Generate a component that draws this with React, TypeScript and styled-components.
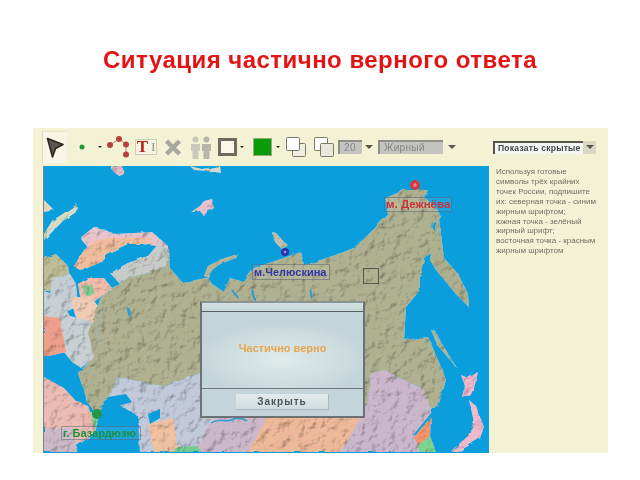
import React from 'react'
import styled, { createGlobalStyle } from 'styled-components'

const GlobalStyle = createGlobalStyle`
  html, body { margin: 0; padding: 0; background: #fff; }
  body { font-family: "Liberation Sans", Arial, sans-serif; width: 640px; height: 480px; overflow: hidden; }
`

const Page = styled.div`
  width: 640px;
  height: 480px;
  padding-top: 47px;
  box-sizing: border-box;
`

const Title = styled.h1`
  margin: 0;
  height: 81px;
  font-size: 24px;
  line-height: 26px;
  font-weight: 700;
  letter-spacing: 0.47px;
  text-align: center;
  color: #e41414;
  filter: blur(0.4px);
`

const Panel = styled.div`
  margin-left: 33px;
  width: 575px;
  height: 325px;
  background: #f3f2d4;
  display: flex;
  flex-direction: column;
  filter: blur(0.55px);
`

const Toolbar = styled.div`
  height: 38px;
  flex: none;
  display: flex;
  align-items: center;
  box-sizing: border-box;
  padding-left: 9px;
`

const Tool = styled.div<{ $w: number; $ml?: number }>`
  width: ${p => p.$w}px;
  margin-left: ${p => p.$ml ?? 0}px;
  flex: none;
  display: flex;
  align-items: center;
  justify-content: center;
  svg { display: block; }
`

const ArrowTool = styled(Tool)`
  height: 32px;
  background: #f8f7e6;
  border-left: 1px solid #dddcc0;
  border-top: 1px solid #e6e5cb;
  box-sizing: border-box;
`

const TextTool = styled(Tool)`
  height: 16px;
  box-sizing: border-box;
  border: 1px solid #cfcdb8;
  background: #f6f5e2;
  font-family: "Liberation Serif", serif;
  font-weight: 700;
  font-size: 17px;
  line-height: 14px;
  color: #b5231e;
  gap: 3px;
`

const Caret = styled.span`
  font-weight: 400;
  font-size: 12px;
  color: #8c8c80;
`

const Drop = styled.i<{ $ml: number; $big?: boolean }>`
  flex: none;
  display: block;
  margin-left: ${p => p.$ml}px;
  width: 0;
  height: 0;
  border-left: ${p => (p.$big ? 4 : 2)}px solid transparent;
  border-right: ${p => (p.$big ? 4 : 2)}px solid transparent;
  border-top: ${p => (p.$big ? 4 : 2)}px solid ${p => (p.$big ? '#56564c' : '#222')};
`

const Swatch = styled.div<{ $ml: number }>`
  flex: none;
  width: 19px;
  height: 18px;
  margin-left: ${p => p.$ml}px;
  background: #0a9a0a;
  border: 1px solid #8fae7a;
  box-sizing: border-box;
`

const Outline = styled.div`
  flex: none;
  width: 19px;
  height: 18px;
  margin-left: 6px;
  border: 3px solid #6d6b5e;
  background: #f8f7e8;
  box-sizing: border-box;
`

const DisabledSelect = styled.div<{ $w: number; $ml: number }>`
  flex: none;
  width: ${p => p.$w}px;
  height: 14px;
  margin-left: ${p => p.$ml}px;
  box-sizing: border-box;
  background: #c4c4c0;
  border-top: 2px solid #8f8f88;
  border-left: 2px solid #8f8f88;
  padding-left: 4px;
  font-size: 10px;
  line-height: 12px;
  letter-spacing: 0.4px;
  color: #85858a;
`

const Reveal = styled.div`
  flex: none;
  width: 90px;
  height: 13px;
  margin-left: 37px;
  box-sizing: border-box;
  background: #f4f6f4;
  border-top: 2px solid #55554e;
  border-left: 2px solid #55554e;
  padding-left: 3px;
  font-size: 8.5px;
  font-weight: 700;
  line-height: 11px;
  letter-spacing: 0.25px;
  color: #45454a;
  white-space: nowrap;
`

const RevealArrow = styled.div`
  flex: none;
  width: 13px;
  height: 13px;
  background: #d8d8c4;
  display: flex;
  align-items: center;
  justify-content: center;
`

const Body = styled.div`
  flex: 1;
  min-height: 0;
  display: flex;
  padding-left: 10px;
`

const MapArea = styled.div`
  position: relative;
  width: 446px;
  height: 287px;
  flex: none;
  overflow: hidden;
  background: #0b9edd;
  border-left: 1px solid #76858c;
  box-sizing: border-box;
  svg { display: block; }
`

const Hint = styled.div`
  margin: 1px 0 0 7px;
  width: 108px;
  font-size: 8px;
  line-height: 9.9px;
  color: #6f6f68;
  white-space: nowrap;
`

const MapLabel = styled.div<{ $x: number; $y: number; $w: number; $h: number; $color: string; $size: number }>`
  position: absolute;
  left: ${p => p.$x}px;
  top: ${p => p.$y}px;
  width: ${p => p.$w}px;
  height: ${p => p.$h}px;
  box-sizing: border-box;
  border: 1px solid rgba(80, 90, 110, 0.5);
  background: rgba(255, 255, 255, 0.08);
  font-size: ${p => p.$size}px;
  font-weight: 700;
  line-height: ${p => p.$h - 2}px;
  padding-left: 1px;
  color: ${p => p.$color};
  white-space: nowrap;
  overflow: hidden;
`

const Pin = styled.div<{ $x: number; $y: number; $r: number; $color: string; $core: string }>`
  position: absolute;
  left: ${p => p.$x - p.$r}px;
  top: ${p => p.$y - p.$r}px;
  width: ${p => p.$r * 2}px;
  height: ${p => p.$r * 2}px;
  border-radius: 50%;
  background: radial-gradient(circle, ${p => p.$core} 0 18%, ${p => p.$color} 30%);
`

const Marker = styled.div`
  position: absolute;
  left: 319px;
  top: 102px;
  width: 16px;
  height: 16px;
  box-sizing: border-box;
  border: 1px solid #55584c;
`

const Dialog = styled.div`
  position: absolute;
  left: 156px;
  top: 135px;
  width: 165px;
  height: 117px;
  box-sizing: border-box;
  border: 2px solid #6c7274;
  border-top-color: #8b9294;
  background: #c3d5da;
  display: flex;
  flex-direction: column;
`

const DialogHead = styled.div`
  height: 8px;
  flex: none;
  background: linear-gradient(#d3e2e2, #c3d8d8);
  border-bottom: 1px solid #57625f;
`

const DialogText = styled.div`
  flex: 1;
  display: flex;
  align-items: center;
  justify-content: center;
  padding-bottom: 4px;
  background: radial-gradient(ellipse 55% 50% at 50% 62%, #e0ebea 0%, #c3d5da 100%);
  font-size: 11px;
  font-weight: 700;
  color: #e9a64e;
`

const DialogFoot = styled.div`
  height: 28px;
  flex: none;
  box-sizing: border-box;
  border-top: 1px solid #6f7a7c;
  display: flex;
  justify-content: center;
  padding-top: 5px;
`

const CloseButton = styled.button`
  width: 93px;
  height: 16px;
  padding: 0;
  border: 0;
  border-bottom: 1px solid #a8babd;
  border-right: 1px solid #a8babd;
  background: linear-gradient(#e2ebeb, #cfdcdd);
  font-family: inherit;
  font-size: 10px;
  font-weight: 700;
  letter-spacing: 1px;
  color: #4e5658;
`

const hintLines = [
  'Используя готовые',
  'символы трёх крайних',
  'точек России, подпишите',
  'их: северная точка - синим',
  'жирным шрифтом;',
  'южная точка - зелёный',
  'жирный шрифт;',
  'восточная точка - красным',
  'жирным шрифтом',
]

const regions: [string, string][] = [
  // north islands
  ['#e8bcc4', '67,0 78,0 80,7 74,9 69,5'],
  ['#d9d8c8', '146,0 158,3 176,0 177,7 165,5 150,4'],
  ['#e9c0cc', '147,46 156,40 160,35 168,33 170,42 163,46 160,50 156,45'],
  ['#dfd7b8', '0,34 10,44 0,46'],
  ['#d9dcc0', '0,68 8,55 20,47 33,38 32,46 18,56 8,66 0,74'],
  ['#c4bfa4', '228,66 232,67 240,76 244,79 238,83 231,76'],
  ['#b8b390', '160,110 164,100 178,93 194,88 192,92 176,98 168,104 165,112'],
  // scandinavia
  ['#e7c4cc', '36,72 50,61 72,68 108,66 124,80 124,88 112,80 70,74 46,84'],
  ['#f2bd9c', '30,100 40,84 52,74 72,72 108,72 103,78 84,78 62,88 62,94 44,102 36,104'],
  ['#c8ccc8', '66,107 84,97 104,90 116,76 124,84 122,100 100,108 84,112 76,118'],
  // west
  ['#bcbc96', '0,92 12,88 24,100 26,112 10,125 0,125'],
  ['#c4ccd4', '8,112 26,108 32,118 34,140 14,150 6,130'],
  ['#f2bcac', '34,118 44,112 60,112 68,122 58,130 44,140 36,130'],
  ['#84cc90', '38,120 48,118 50,127 42,130'],
  ['#f0ccb4', '26,132 46,130 54,140 50,156 34,158'],
  ['#c8d0d4', '0,125 14,130 26,150 50,156 50,192 34,204 20,186 8,190 0,190'],
  ['#eea08c', '0,150 16,152 22,186 6,190 0,190'],
  ['#ecbcb4', '0,210 20,212 34,236 44,240 52,262 44,272 24,286 0,286'],
  ['#ccb8c8', '0,262 28,262 34,286 0,286'],
  // russia
  ['#b0b190', '124,84 126,102 138,116 164,112 168,118 180,126 186,112 200,116 210,102 240,92 257,86 260,99 277,94 297,87 310,82 327,66 344,49 342,32 360,24 384,24 380,31 392,42 396,50 388,60 392,70 394,82 380,92 376,110 376,124 362,141 360,174 384,171 397,201 402,214 394,241 385,244 380,224 340,204 327,207 324,240 160,240 157,207 120,221 74,211 64,232 52,248 44,237 34,207 50,191 44,167 57,131 68,122 76,118 84,112 100,108 122,100'],
  ['#aeaf8e', '394,45 400,92 414,108 424,128 425,141 412,128 402,116 392,104 386,94'],
  ['#b2b194', '387,164 392,166 400,181 414,204 408,196 394,180'],
  ['#aeae90', '313,83 322,76 326,80 318,88'],
  // central asia
  ['#c2c9da', '74,211 120,221 157,207 170,250 222,250 214,270 207,286 96,286 94,250 64,232'],
  ['#efc1a0', '104,258 130,252 134,286 110,286'],
  ['#ccb8ca', '170,250 226,250 222,270 206,286 150,286 160,268'],
  ['#edb998', '224,250 325,240 297,286 204,286'],
  ['#cbb7cc', '327,207 340,204 380,224 388,246 370,268 376,286 297,286 318,250 324,234'],
  ['#f29470', '387,251 370,271 376,284 386,270'],
  ['#7cd490', '373,280 386,270 392,286 376,286'],
  ['#73ca92', '126,286 134,281 152,280 158,286'],
  // japan
  ['#f2b8cc', '417,209 424,212 434,206 430,222 427,228 418,231 421,220'],
  ['#f2b8cc', '425,234 432,240 440,261 436,272 424,280 414,286 406,286 424,270 430,256'],
  // azerbaijan glow
  ['#8cd89e', '44,246 52,246 60,268 54,272 48,260'],
  ['#ecb4ac', '36,248 46,246 50,262 40,268'],
]

const waters = [
  '0,191 20,187 28,196 40,204 30,206 33,236 20,222 0,211',
  '64,231 82,228 88,236 74,240 70,262 72,286 54,286 50,272 54,254',
  '104,248 116,243 116,252 106,258',
]

const RussiaMap = () => (
  <svg width="446" height="287" viewBox="0 0 446 287">
    <defs>
      <filter id="relief" x="0" y="0" width="100%" height="100%" colorInterpolationFilters="sRGB">
        <feTurbulence type="fractalNoise" baseFrequency="0.1" numOctaves="4" seed="7" result="noise" />
        <feDisplacementMap in="SourceGraphic" in2="noise" scale="3" result="shape" />
        <feDiffuseLighting in="noise" surfaceScale="1.5" diffuseConstant="1.2" lightingColor="#ffffff" result="light">
          <feDistantLight azimuth="225" elevation="58" />
        </feDiffuseLighting>
        <feBlend in="shape" in2="light" mode="multiply" result="lit" />
        <feComposite in="lit" in2="shape" operator="in" />
      </filter>
    </defs>
    <g filter="url(#relief)">
      {regions.map(([fill, points], i) => (
        <polygon key={i} fill={fill} points={points} />
      ))}
    </g>
    {waters.map((points, i) => (
      <polygon key={i} fill="#0b9edd" points={points} />
    ))}
    <g fill="none" stroke="#2e9cd8" strokeWidth="1.4">
      <path d="M167 257c8-6 14 0 20-3s10-2 16 1" />
      <path d="M84 142l2 8" strokeWidth="3" />
      <path d="M188 124c2 4 4 4 6 8M208 124c2 4 0 8 4 10M266 124c2 2 0 6 2 8" strokeWidth="2" />
      <path d="M57 140c2 14-8 20 0 40" stroke="#8fb4c8" strokeWidth="0.8" />
    </g>
  </svg>
)

const ArrowIcon = () => (
  <svg width="18" height="22" viewBox="0 0 18 22">
    <path d="M1.500 1.500 17 7.500 9.500 11.500 6.500 20Z" fill="#5b5650" stroke="#2c2622" strokeWidth="1.600" strokeLinejoin="round" />
  </svg>
)

const NodesIcon = () => (
  <svg width="22" height="22" viewBox="0 0 22 22">
    <path d="M3 9 12 3 19 8V18" fill="none" stroke="#b78f8c" strokeWidth="1" />
    <g fill="#b8403f">
      <circle cx="3" cy="9" r="3" />
      <circle cx="12" cy="3" r="3" />
      <circle cx="19" cy="8.500" r="3" />
      <circle cx="19" cy="18.500" r="3" />
    </g>
  </svg>
)

const CrossIcon = () => (
  <svg width="18" height="17" viewBox="0 0 18 17">
    <path d="M2.500 2 15.500 15M15.500 2 2.500 15" stroke="#a8a89e" strokeWidth="4.500" />
  </svg>
)

const PeopleIcon = () => (
  <svg width="22" height="23" viewBox="0 0 22 23">
    <g fill="#c9c9b9">
      <circle cx="5.500" cy="3.500" r="3" />
      <path d="M1 8h9v7H8.500v8h-6v-8H1Z" />
    </g>
    <g fill="#b6b7ab">
      <circle cx="16.500" cy="3.500" r="3" />
      <path d="M12 8h9v7h-1.500v8h-6v-8H12Z" />
    </g>
  </svg>
)

const LayersIcon = ({ front }: { front: boolean }) => (
  <svg width="20" height="20" viewBox="0 0 20 20">
    {front ? (
      <>
        <rect x="6.500" y="6.500" width="13" height="13" rx="1" fill="#f0f0e0" stroke="#77776a" />
        <rect x="0.500" y="0.500" width="13" height="13" rx="1" fill="#ffffff" stroke="#77776a" />
      </>
    ) : (
      <>
        <rect x="0.500" y="0.500" width="13" height="13" rx="1" fill="#ffffff" stroke="#77776a" />
        <rect x="6.500" y="6.500" width="13" height="13" rx="1" fill="#e8e8dc" stroke="#77776a" />
      </>
    )}
  </svg>
)

const DotIcon = () => (
  <svg width="6" height="6" viewBox="0 0 6 6">
    <circle cx="3" cy="3" r="2.500" fill="#1f9a3c" />
  </svg>
)

export default function App() {
  return (
    <Page>
      <GlobalStyle />
      <Title>Ситуация частично верного ответа</Title>
      <Panel>
        <Toolbar>
          <ArrowTool $w={25}><ArrowIcon /></ArrowTool>
          <Tool $w={6} $ml={12}><DotIcon /></Tool>
          <Drop $ml={13} />
          <Tool $w={22} $ml={5}><NodesIcon /></Tool>
          <TextTool $w={22} $ml={6}>T<Caret>I</Caret></TextTool>
          <Tool $w={18} $ml={7}><CrossIcon /></Tool>
          <Tool $w={22} $ml={8}><PeopleIcon /></Tool>
          <Outline />
          <Drop $ml={3} />
          <Swatch $ml={9} />
          <Drop $ml={4} />
          <Tool $w={20} $ml={6}><LayersIcon front /></Tool>
          <Tool $w={20} $ml={8}><LayersIcon front={false} /></Tool>
          <DisabledSelect $w={24} $ml={4}>20</DisabledSelect>
          <Drop $ml={3} $big />
          <DisabledSelect $w={65} $ml={5}>Жирный</DisabledSelect>
          <Drop $ml={5} $big />
          <Reveal>Показать скрытые</Reveal>
          <RevealArrow><Drop $ml={0} $big /></RevealArrow>
        </Toolbar>
        <Body>
          <MapArea>
            <RussiaMap />
            <Marker />
            <Pin $x={241} $y={86} $r={4} $color="#2b2fa8" $core="#8f9ae0" />
            <Pin $x={371} $y={19} $r={5} $color="#cf3d42" $core="#e88" />
            <Pin $x={53} $y={248} $r={5} $color="#27964a" $core="#27964a" />
            <MapLabel $x={208} $y={98} $w={78} $h={16} $color="#3338a8" $size={11}>м.Челюскина</MapLabel>
            <MapLabel $x={340} $y={31} $w={68} $h={15} $color="#c8323a" $size={11.5}>м. Дежнёва</MapLabel>
            <MapLabel $x={17} $y={260} $w={80} $h={14} $color="#1f8f3a" $size={11}>г. Базардюзю</MapLabel>
            <Dialog>
              <DialogHead />
              <DialogText>Частично верно</DialogText>
              <DialogFoot>
                <CloseButton>Закрыть</CloseButton>
              </DialogFoot>
            </Dialog>
          </MapArea>
          <Hint>
            {hintLines.map(line => (
              <div key={line}>{line}</div>
            ))}
          </Hint>
        </Body>
      </Panel>
    </Page>
  )
}
